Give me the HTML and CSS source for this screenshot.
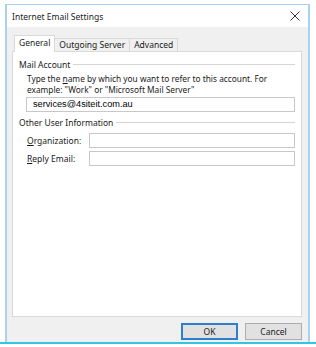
FILE: index.html
```html
<!DOCTYPE html>
<html lang="en">

<head>
    <meta charset="UTF-8">
    <title>Internet Email Settings</title>
    <link rel="stylesheet" href="styles.css">
</head>

<body>
    <div class="window">
        <div class="titlebar">
            <span class="title">Internet Email Settings</span>
            <svg class="close" width="10" height="10" viewBox="0 0 10 10">
                <path d="M0.5 0.5 L9.5 9.5 M9.5 0.5 L0.5 9.5" stroke="#333" stroke-width="1" fill="none" />
            </svg>
        </div>

        <div class="body">
            <div class="tabs">
                <div class="tab active">General</div>
                <div class="tab">Outgoing Server</div>
                <div class="tab">Advanced</div>
            </div>

            <div class="panel">
                <div class="group-title">
                    <span>Mail Account</span>
                    <div class="rule"></div>
                </div>
                <p class="hint">Type the <span class="key">n</span>ame by which you want to refer to this account. For example: "Work" or "Microsoft Mail Server"</p>
                <div class="input account">services@4siteit.com.au</div>

                <div class="group-title">
                    <span>Other User Information</span>
                    <div class="rule"></div>
                </div>
                <div class="field">
                    <label><span class="key">O</span>rganization:</label>
                    <div class="input"></div>
                </div>
                <div class="field">
                    <label><span class="key">R</span>eply Email:</label>
                    <div class="input"></div>
                </div>
            </div>

            <div class="buttons">
                <button class="btn default">OK</button>
                <button class="btn">Cancel</button>
            </div>
        </div>
    </div>
    <div class="taskbar-line"></div>
</body>

</html>
```

FILE: styles.css
```css
html,
body {
    margin: 0;
    background: #fff;
    font-family: 'Noto Sans', sans-serif;
    font-size: 8.5px;
    color: #1a1a1a;
}

.window {
    margin: 4px 6px 0 5px;
    height: 338px;
    border-top: 1px solid #a8d2ee;
    border-left: 2px solid #a8d2ee;
    border-right: 2px solid #a8d2ee;
    background: #f0f0f0;
    box-sizing: border-box;
    display: flex;
    flex-direction: column;
}

.titlebar {
    height: 22px;
    background: #fff;
    display: flex;
    align-items: center;
    justify-content: space-between;
    padding: 0 8px 0 5px;
    flex-shrink: 0;
}

.title {
    font-size: 8.5px;
    color: #222;
}

.body {
    padding: 8px 6px 0 5px;
    flex: 1;
    display: flex;
    flex-direction: column;
}

.tabs {
    display: flex;
    align-items: flex-end;
    height: 16px;
    padding-left: 2px;
    position: relative;
    z-index: 1;
}

.tab {
    height: 13px;
    line-height: 12px;
    padding: 0 4px;
    border: 1px solid #d9d9d9;
    border-bottom: none;
    background: #f0f0f0;
    box-sizing: border-box;
    margin-left: -1px;
}

.tab.active {
    height: 17px;
    line-height: 14px;
    background: #fff;
    margin-left: 0;
    margin-bottom: -1px;
}

.key {
    text-decoration: underline;
}

.panel {
    background: #fff;
    border: 1px solid #d9d9d9;
    height: 266px;
    box-sizing: border-box;
    padding: 6px 6px 0 6px;
}

.group-title {
    display: flex;
    align-items: center;
    gap: 3px;
    height: 12px;
}

.rule {
    flex: 1;
    border-top: 1px solid #d5d5d5;
}

.hint {
    margin: 3px 0 0 8px;
    line-height: 11px;
    width: 255px;
    font-size: 8.3px;
}

.input {
    height: 15px;
    border: 1px solid #c8c8c8;
    box-sizing: border-box;
    background: #fff;
    flex: 1;
}

.account {
    margin: 2px 0 4px 7px;
    height: 15px;
    line-height: 13px;
    padding-left: 6px;
    font-family: 'Liberation Sans', Arial, sans-serif;
    font-size: 9.2px;
    color: #000;
}

.field {
    display: flex;
    align-items: center;
    margin: 5px 0 0 7px;
}

.field + .field {
    margin-top: 3px;
}

.field label {
    width: 62px;
    padding-left: 1px;
}

.buttons {
    display: flex;
    justify-content: flex-end;
    gap: 7px;
    padding: 6px 0 0;
}

.btn {
    width: 57px;
    height: 17px;
    border: 1px solid #adadad;
    background: #e1e1e1;
    font-family: 'Noto Sans', sans-serif;
    font-size: 8.5px;
    color: #1a1a1a;
    padding: 0;
}

.btn.default {
    border: 1px solid #2f7fcf;
    box-shadow: inset 0 0 0 1px #2f7fcf;
}

.taskbar-line {
    height: 2px;
    background: #34c5df;
}
```
